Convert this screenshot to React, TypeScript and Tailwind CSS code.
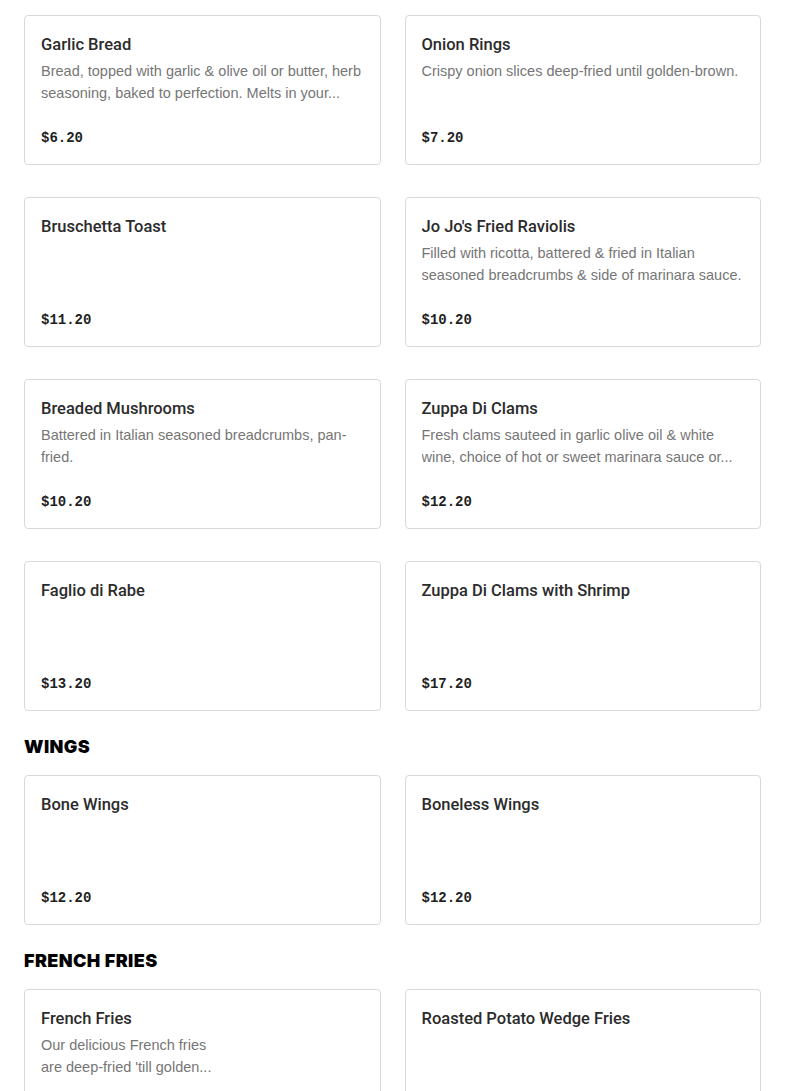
type Item = {
  name: string;
  desc?: React.ReactNode;
  price: string;
};

type Section = {
  title?: string;
  items: Item[];
};

const sections: Section[] = [
  {
    items: [
      {
        name: "Garlic Bread",
        desc: "Bread, topped with garlic & olive oil or butter, herb seasoning, baked to perfection. Melts in your...",
        price: "$6.20",
      },
      { name: "Onion Rings", desc: "Crispy onion slices deep-fried until golden-brown.", price: "$7.20" },
      { name: "Bruschetta Toast", price: "$11.20" },
      {
        name: "Jo Jo's Fried Raviolis",
        desc: "Filled with ricotta, battered & fried in Italian seasoned breadcrumbs & side of marinara sauce.",
        price: "$10.20",
      },
      { name: "Breaded Mushrooms", desc: "Battered in Italian seasoned breadcrumbs, pan-fried.", price: "$10.20" },
      {
        name: "Zuppa Di Clams",
        desc: "Fresh clams sauteed in garlic olive oil & white wine, choice of hot or sweet marinara sauce or...",
        price: "$12.20",
      },
      { name: "Faglio di Rabe", price: "$13.20" },
      { name: "Zuppa Di Clams with Shrimp", price: "$17.20" },
    ],
  },
  {
    title: "WINGS",
    items: [
      { name: "Bone Wings", price: "$12.20" },
      { name: "Boneless Wings", price: "$12.20" },
    ],
  },
  {
    title: "FRENCH FRIES",
    items: [
      {
        name: "French Fries",
        desc: (
          <>
            Our delicious French fries
            <br />
            are deep-fried 'till golden...
          </>
        ),
        price: "$5.20",
      },
      { name: "Roasted Potato Wedge Fries", price: "$6.20" },
    ],
  },
];

function MenuCard({ item }: { item: Item }) {
  return (
    <div className="h-[150px] flex flex-col border border-[#d9d9d9] rounded-[4px] bg-white px-4 pt-[17px] pb-[15px]">
      <div className="text-[16.5px] leading-6 font-medium text-[#2b2b2b] font-['Roboto',sans-serif]">
        {item.name}
      </div>
      {item.desc && (
        <p className="mt-[3px] text-[14.5px] leading-[22px] text-[#767676] line-clamp-2 font-['Liberation_Sans',sans-serif]">
          {item.desc}
        </p>
      )}
      <div className="mt-auto text-[14px] leading-[22px] font-bold text-[#1f1f1f] font-['Liberation_Mono',monospace]">
        {item.price}
      </div>
    </div>
  );
}

export default function App() {
  return (
    <div className="min-h-screen bg-white px-6 pt-[15px] pb-6 font-['Roboto','Liberation_Sans',sans-serif]">
      {sections.map((section, i) => (
        <div key={i}>
          {section.title && (
            <h2 className="mt-6 mb-4 text-[18px] leading-6 font-black tracking-[0.4px] text-black font-['Inter',sans-serif]">
              {section.title}
            </h2>
          )}
          <div className="grid grid-cols-2 gap-x-6 gap-y-8">
            {section.items.map((item) => (
              <MenuCard key={item.name} item={item} />
            ))}
          </div>
        </div>
      ))}
    </div>
  );
}
